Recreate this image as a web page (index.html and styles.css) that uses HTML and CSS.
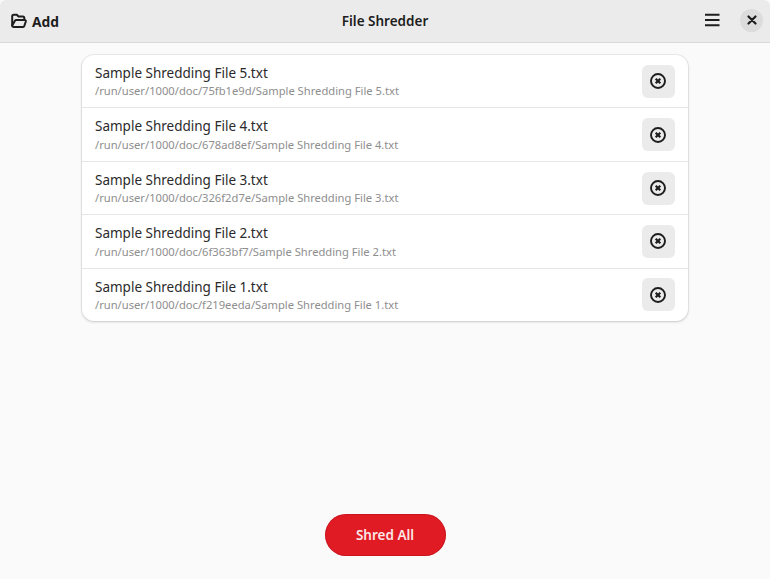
FILE: index.html
```html
<!DOCTYPE html>
<html lang="en">
<head>
<meta charset="utf-8">
<title>File Shredder</title>
<link rel="stylesheet" href="styles.css">
</head>
<body>
<div class="window">
  <header class="headerbar">
    <button class="add">
      <svg class="icon16" viewBox="0 0 16 16" fill="none" stroke="#1d1d1d" stroke-width="2" stroke-linejoin="round" stroke-linecap="round"><path d="M1.200 12.600V3.200a1.500 1.500 0 0 1 1.500-1.500h3.100l1.700 1.800h4.300a1.500 1.500 0 0 1 1.500 1.500v1.500"/><path d="M1.200 12.600c0 .8.600 1.300 1.300 1.300h9.600c.6 0 1-.3 1.200-.9l1.500-4.500c.2-.8-.3-1.400-1-1.400H5c-.6 0-1 .3-1.200.9z"/></svg>
      <span>Add</span>
    </button>
    <h1 class="title">File Shredder</h1>
    <div class="controls">
      <button class="menu" aria-label="Menu">
        <svg class="icon16" viewBox="0 0 16 16" fill="none" stroke="#1d1d1d" stroke-width="2"><path d="M1 2.700h14.500M1 8h14.500M1 13.300h14.500"/></svg>
      </button>
      <button class="close" aria-label="Close">
        <svg class="icon10" viewBox="0 0 10 10" fill="none" stroke="#1d1d1d" stroke-width="2.200" stroke-linecap="round"><path d="M1.500 1.500l7 7M8.500 1.500l-7 7"/></svg>
      </button>
    </div>
  </header>
  <main class="content">
    <ul class="list">
      <li class="row"><div class="text"><div class="name">Sample Shredding File 5.txt</div><div class="path">/run/user/1000/doc/75fb1e9d/Sample Shredding File 5.txt</div></div><button class="remove" aria-label="Remove"><svg class="icon16" viewBox="0 0 16 16" fill="none" stroke="#1d1d1d"><circle cx="8" cy="8" r="7" stroke-width="1.900"/><path d="M5.700 5.700l4.600 4.600M10.300 5.700l-4.600 4.600" stroke-width="2.200"/></svg></button></li>
      <li class="row"><div class="text"><div class="name">Sample Shredding File 4.txt</div><div class="path">/run/user/1000/doc/678ad8ef/Sample Shredding File 4.txt</div></div><button class="remove" aria-label="Remove"><svg class="icon16" viewBox="0 0 16 16" fill="none" stroke="#1d1d1d"><circle cx="8" cy="8" r="7" stroke-width="1.900"/><path d="M5.700 5.700l4.600 4.600M10.300 5.700l-4.600 4.600" stroke-width="2.200"/></svg></button></li>
      <li class="row"><div class="text"><div class="name">Sample Shredding File 3.txt</div><div class="path">/run/user/1000/doc/326f2d7e/Sample Shredding File 3.txt</div></div><button class="remove" aria-label="Remove"><svg class="icon16" viewBox="0 0 16 16" fill="none" stroke="#1d1d1d"><circle cx="8" cy="8" r="7" stroke-width="1.900"/><path d="M5.700 5.700l4.600 4.600M10.300 5.700l-4.600 4.600" stroke-width="2.200"/></svg></button></li>
      <li class="row"><div class="text"><div class="name">Sample Shredding File 2.txt</div><div class="path">/run/user/1000/doc/6f363bf7/Sample Shredding File 2.txt</div></div><button class="remove" aria-label="Remove"><svg class="icon16" viewBox="0 0 16 16" fill="none" stroke="#1d1d1d"><circle cx="8" cy="8" r="7" stroke-width="1.900"/><path d="M5.700 5.700l4.600 4.600M10.300 5.700l-4.600 4.600" stroke-width="2.200"/></svg></button></li>
      <li class="row"><div class="text"><div class="name">Sample Shredding File 1.txt</div><div class="path">/run/user/1000/doc/f219eeda/Sample Shredding File 1.txt</div></div><button class="remove" aria-label="Remove"><svg class="icon16" viewBox="0 0 16 16" fill="none" stroke="#1d1d1d"><circle cx="8" cy="8" r="7" stroke-width="1.900"/><path d="M5.700 5.700l4.600 4.600M10.300 5.700l-4.600 4.600" stroke-width="2.200"/></svg></button></li>
    </ul>
    <button class="shred">Shred All</button>
  </main>
</div>
</body>
</html>
```
FILE: styles.css
```css
* { box-sizing: border-box; }
html, body { height: 100%; }
body { margin: 0; background: #fafafa; font-family: "Noto Sans", "Open Sans", sans-serif; color: #2a2a2a; }
button { border: 0; padding: 0; background: none; font: inherit; color: inherit; display: flex; align-items: center; justify-content: center; }
.window { height: 100%; display: flex; flex-direction: column; }
.headerbar { height: 43px; flex: none; background: #ebebeb; border-bottom: 1px solid #d9d9d9; border-radius: 6px 6px 0 0; display: flex; align-items: center; justify-content: space-between; padding: 0 7px 0 11px; position: relative; }
.add { gap: 5px; font-size: 13.800px; font-weight: 700; color: #1d1d1d; }
.title { position: absolute; left: 0; right: 0; margin: 0; text-align: center; font-size: 13.500px; font-weight: 600; color: #1d1d1d; pointer-events: none; }
.controls { display: flex; align-items: center; gap: 20px; position: relative; top: -1px; }
.icon16 { width: 16px; height: 16px; display: block; }
.icon10 { width: 10px; height: 10px; display: block; }
.menu { width: 16px; height: 24px; }
.close { width: 23px; height: 23px; border-radius: 50%; background: #dcdcdc; }
.content { flex: 1; display: flex; flex-direction: column; align-items: center; justify-content: space-between; padding: 12px 0 23px; }
.list { list-style: none; margin: 0; padding: 0; width: 606px; height: 266px; background: #fff; border-radius: 12px; box-shadow: 0 0 0 1px rgba(0,0,0,.05), 0 1px 3px rgba(0,0,0,.16); display: flex; flex-direction: column; }
.row { flex: 1; display: flex; align-items: center; justify-content: space-between; padding: 0 13.500px 0 13px; border-bottom: 1px solid #e6e6e6; }
.row:last-child { border-bottom: 0; }
.text { display: flex; flex-direction: column; gap: 0.500px; padding-top: 1px; }
.name { font-size: 13.500px; line-height: 19px; }
.path { font-size: 11.200px; line-height: 16px; color: #8e8e8e; }
.remove { width: 33px; height: 33px; border-radius: 6px; background: #ebebeb; }
.shred { width: 121px; height: 42px; border-radius: 21px; background: #e01b24; color: #fbe6e6; font-size: 13.500px; font-weight: 600; box-shadow: inset 0 0 0 1px rgba(160,10,20,.35); }
```
